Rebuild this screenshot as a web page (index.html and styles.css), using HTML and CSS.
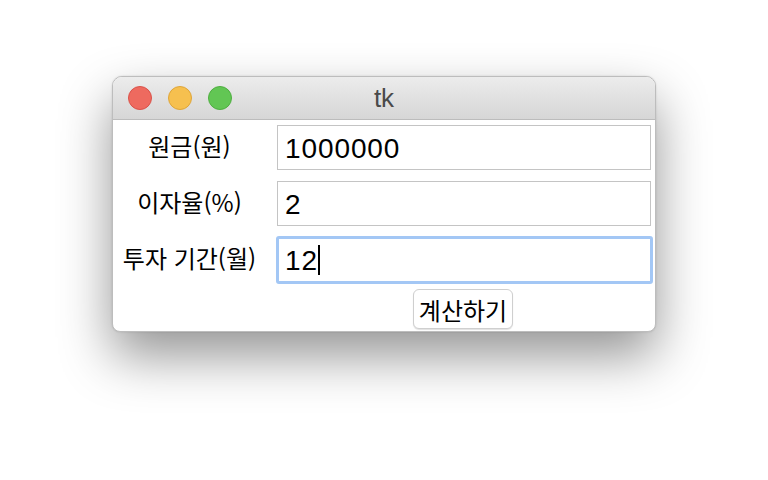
FILE: index.html
```html
<!DOCTYPE html>
<html lang="ko">
<head>
<meta charset="utf-8">
<title>tk</title>
<link rel="stylesheet" href="styles.css">
</head>
<body>
<div class="desktop">
  <div class="window">
    <div class="titlebar">
      <div class="lights">
        <span class="light red"></span>
        <span class="light yellow"></span>
        <span class="light green"></span>
      </div>
      <div class="title">tk</div>
    </div>
    <div class="content">
      <div class="label">원금(원)</div>
      <div class="entry">1000000</div>
      <div class="label">이자율(%)</div>
      <div class="entry">2</div>
      <div class="label">투자 기간(월)</div>
      <div class="entry focused">12<span class="caret"></span></div>
      <div class="spacer"></div>
      <div class="btn-cell"><button class="btn">계산하기</button></div>
    </div>
  </div>
</div>
</body>
</html>
```

FILE: styles.css
```css
* { box-sizing: border-box; }
html, body { margin: 0; padding: 0; background: #ffffff; }
body {
  width: 768px;
  height: 480px;
  overflow: hidden;
  font-family: "Liberation Sans", "Noto Sans CJK KR", sans-serif;
}
.desktop {
  display: flex;
  justify-content: center;
  padding-top: 76px;
}
.window {
  width: 544px;
  height: 256px;
  background: #ffffff;
  border: 1px solid #bdbdbd;
  border-radius: 10px 10px 8px 8px;
  overflow: hidden;
  box-shadow: 0 24px 52px rgba(0,0,0,0.42), 0 0 2px rgba(0,0,0,0.15);
  display: flex;
  flex-direction: column;
}
.titlebar {
  height: 43px;
  flex: none;
  background: linear-gradient(#ececec, #d6d6d6);
  border-bottom: 1px solid #bcbcbc;
  position: relative;
  display: flex;
  align-items: center;
  justify-content: center;
}
.lights {
  position: absolute;
  left: 15px;
  top: 9px;
  display: flex;
  gap: 16px;
}
.light {
  width: 24px;
  height: 24px;
  border-radius: 50%;
  display: block;
}
.red { background: #ee6a5f; border: 1px solid #d9524a; }
.yellow { background: #f6c04f; border: 1px solid #dea53a; }
.green { background: #62c654; border: 1px solid #4fae41; }
.title {
  font-family: "Liberation Sans", sans-serif;
  font-size: 26px;
  color: #4a4a4a;
  margin-top: 1px;
}
.content {
  display: grid;
  grid-template-columns: 153px 374px;
  column-gap: 11px;
  row-gap: 11px;
  grid-auto-rows: 45px;
  padding-top: 5px;
}
.label {
  font-family: "Noto Sans CJK KR", sans-serif;
  font-size: 24px;
  color: #000;
  display: flex;
  align-items: center;
  justify-content: center;
  padding-bottom: 4px;
  white-space: nowrap;
}
.entry {
  border: 1px solid #c4c4c4;
  background: #fff;
  font-size: 28px;
  letter-spacing: 0.9px;
  color: #000;
  display: flex;
  align-items: center;
  padding-left: 7px;
  padding-top: 2px;
}
.entry.focused {
  border: 3px solid #a3c7f5;
  border-radius: 3px;
  margin: -1px -2px -2px -1px;
  padding-left: 6px;
}
.caret {
  display: inline-block;
  width: 2px;
  height: 30px;
  background: #000;
  margin-left: 0;
  margin-top: -2px;
}
.btn-cell {
  display: flex;
  justify-content: center;
  align-items: flex-start;
  margin-top: -4px;
}
.btn {
  width: 100px;
  height: 40px;
  background: #fff;
  border: 1px solid #cfcfcf;
  border-radius: 6px;
  box-shadow: 0 1px 1px rgba(0,0,0,0.12);
  font-family: "Noto Sans CJK KR", sans-serif;
  font-size: 24px;
  color: #000;
  padding: 0;
  margin-left: -2px;
  white-space: nowrap;
}
```
